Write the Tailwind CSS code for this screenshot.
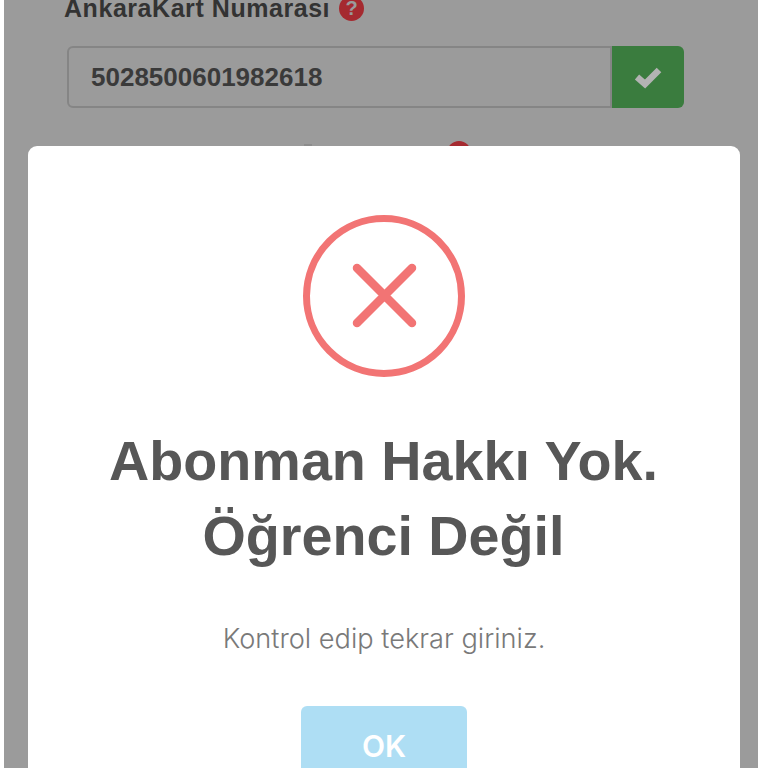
<!DOCTYPE html>
<html lang="tr">
<head>
    <meta charset="UTF-8">
    <meta name="viewport" content="width=device-width, initial-scale=1.0">
    <title>AnkaraKart Abonman</title>
    <script src="https://cdn.jsdelivr.net/npm/@tailwindcss/browser@4"></script>
</head>
<body class="bg-white font-['Liberation_Sans',Arial,sans-serif]">
    <div class="relative w-[768px] h-[768px] overflow-hidden bg-white">

        <!-- form behind the overlay -->
        <div class="ml-[4px] w-[754px] h-[768px] bg-[#9b9b9b] pl-[60px] overflow-hidden">
            <div class="flex items-center gap-[9px] h-[34px] -mt-[9px]">
                <span class="text-[25px] tracking-[0.55px] font-bold text-[#333333] leading-none">AnkaraKart Numarası</span>
                <span class="flex items-center justify-center w-[25px] h-[25px] rounded-full bg-[#a52a30] text-[#9b9b9b] text-[20px] font-bold leading-none">?</span>
            </div>
            <div class="flex mt-[21px] ml-[3px] w-[617px] h-[62px]">
                <div class="flex-1 flex items-center pl-[22px] bg-[#9b9b9b] border-2 border-[#858585] rounded-l-[6px] text-[26px] font-bold text-[#3a3a3a]">5028500601982618</div>
                <div class="flex items-center justify-center w-[72px] bg-[#3a7c3e] rounded-r-[6px]">
                    <svg width="28" height="24" viewBox="0 0 28 24" fill="none">
                        <path d="M3 12 L11 19 L25 5" stroke="#b3b3b3" stroke-width="6.5"/>
                    </svg>
                </div>
            </div>
            <div class="flex items-start mt-[33px]">
                <div class="ml-[240px] mt-[3px] w-[8px] h-[2px] bg-[#8c8c8c]"></div>
                <div class="ml-[135px] w-[24px] h-[24px] rounded-full bg-[#a52a30]"></div>
            </div>
        </div>

        <!-- sweetalert modal -->
        <div class="absolute left-[28px] top-[146px] w-[712px] h-[640px] bg-white rounded-[9px] flex flex-col items-center pt-[69px]">
            <svg width="162" height="162" viewBox="0 0 162 162" fill="none">
                <circle cx="81" cy="81" r="77.5" stroke="#f27474" stroke-width="7"/>
                <path d="M54 53 L109 108 M109 53 L54 108" stroke="#f27474" stroke-width="8.5" stroke-linecap="round"/>
            </svg>
            <h2 class="mt-[47px] -ml-[1px] text-center text-[55.7px] leading-[75px] font-bold text-[#575757]">Abonman Hakkı Yok.<br>Öğrenci Değil</h2>
            <p class="mt-[47px] font-['Inter',sans-serif] font-light text-[27.2px] leading-[36px] text-[#797979]">Kontrol edip tekrar giriniz.</p>
            <button class="mt-[49px] w-[166px] h-[80px] bg-[#aedef4] rounded-[6px] text-white text-[30px] font-['Inter',sans-serif] font-semibold">OK</button>
        </div>
    </div>
</body>
</html>
